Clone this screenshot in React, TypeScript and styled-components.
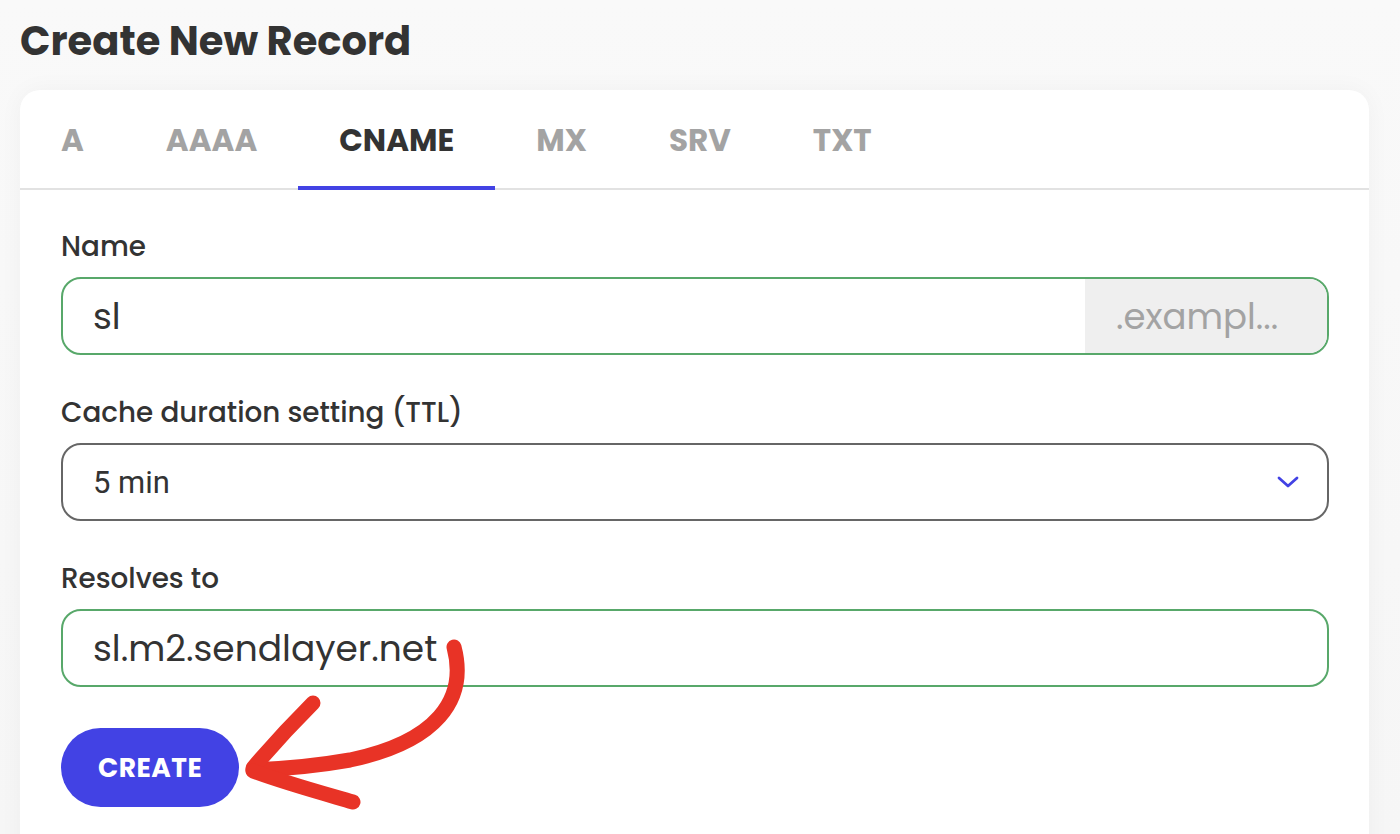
import React from "react";
import styled, { createGlobalStyle } from "styled-components";

const Global = createGlobalStyle`
  * { box-sizing: border-box; }
  html, body { margin: 0; padding: 0; }
  body {
    background: #f7f7f7;
    font-family: "Poppins", "Inter", "Noto Sans", sans-serif;
    color: #333333;
    overflow: hidden;
  }
`;

const Page = styled.div`
  position: relative;
  width: 1400px;
  height: 834px;
  padding: 17px 31px 0 20px;
  background: linear-gradient(180deg, #f9f9f9 0%, #f6f6f6 100%);
`;

const Title = styled.h1`
  margin: 0 0 25px 0;
  font-size: 40px;
  line-height: 48px;
  font-weight: 700;
  color: #333333;
`;

const Card = styled.section`
  background: #ffffff;
  border-radius: 20px;
  box-shadow: 0 0 24px rgba(0, 0, 0, 0.04);
  padding-bottom: 60px;
`;

const TabBar = styled.nav`
  display: flex;
  border-bottom: 2px solid #e2e2e2;
  height: 100px;
`;

const Tab = styled.button<{ $active?: boolean }>`
  appearance: none;
  border: none;
  background: none;
  padding: 4px 41px 0;
  margin: 0 0 -2px 0;
  height: 100px;
  font-family: inherit;
  font-size: 31px;
  font-weight: 700;
  color: ${(p) => (p.$active ? "#333333" : "#a3a3a3")};
  border-bottom: 4px solid ${(p) => (p.$active ? "#4242e4" : "transparent")};
  cursor: pointer;
`;

const Form = styled.div`
  display: flex;
  flex-direction: column;
  padding: 42px 40px 0 41px;
`;

const Field = styled.div`
  display: flex;
  flex-direction: column;
  gap: 15px;
  margin-bottom: 43px;
`;

const Label = styled.label`
  font-size: 27.8px;
  line-height: 30px;
  font-weight: 500;
  color: #333333;
`;

const InputBox = styled.div<{ $tone: "ok" | "plain" }>`
  display: flex;
  align-items: stretch;
  height: 78px;
  border: 2px solid ${(p) => (p.$tone === "ok" ? "#58a86a" : "#666666")};
  border-radius: 20px;
  overflow: hidden;
  background: #ffffff;
`;

const Value = styled.div`
  flex: 1;
  display: flex;
  align-items: center;
  padding-left: 30px;
  font-size: 36px;
  color: #333333;
`;

const SelectValue = styled(Value)`
  font-family: "Roboto", "Liberation Sans", sans-serif;
  font-size: 31px;
  justify-content: space-between;
  padding-right: 28px;
`;

const Suffix = styled.div`
  width: 242px;
  display: flex;
  align-items: center;
  padding-left: 31px;
  background: #efefef;
  color: #a3a3a3;
  font-size: 35.5px;
  white-space: nowrap;
`;

const CreateButton = styled.button`
  align-self: flex-start;
  margin-top: -2px;
  height: 79px;
  padding: 0 37px;
  border: none;
  border-radius: 40px;
  background: #4242e4;
  color: #ffffff;
  font-family: inherit;
  font-size: 26.5px;
  font-weight: 700;
  letter-spacing: 0.5px;
  cursor: pointer;
`;

const Overlay = styled.svg`
  position: absolute;
  left: 0;
  top: 0;
  pointer-events: none;
`;

const Chevron = () => (
  <svg width="22" height="14" viewBox="0 0 22 14" fill="none">
    <path d="M2 3 L11 11 L20 3" stroke="#4242e4" strokeWidth="2.8" strokeLinecap="round" strokeLinejoin="round" />
  </svg>
);

const tabs = ["A", "AAAA", "CNAME", "MX", "SRV", "TXT"];

export default function App() {
  return (
    <Page>
      <Global />
      <Title>Create New Record</Title>
      <Card>
        <TabBar>
          {tabs.map((t) => (
            <Tab key={t} $active={t === "CNAME"}>
              {t}
            </Tab>
          ))}
        </TabBar>
        <Form>
          <Field>
            <Label>Name</Label>
            <InputBox $tone="ok">
              <Value>sl</Value>
              <Suffix>.exampl...</Suffix>
            </InputBox>
          </Field>
          <Field>
            <Label>Cache duration setting (TTL)</Label>
            <InputBox $tone="plain">
              <SelectValue>
                5 min
                <Chevron />
              </SelectValue>
            </InputBox>
          </Field>
          <Field>
            <Label>Resolves to</Label>
            <InputBox $tone="ok">
              <Value>sl.m2.sendlayer.net</Value>
            </InputBox>
          </Field>
          <CreateButton>CREATE</CreateButton>
        </Form>
      </Card>
      <Overlay width="1400" height="834" viewBox="0 0 1400 834">
        <g stroke="#e83326" strokeWidth="15" strokeLinecap="round" strokeLinejoin="round" fill="none">
          <path d="M454 647 C468 700 436 742 350 760 C305 768 275 769 253 770" />
          <path d="M313 703 C294 722 270 748 253 768" />
          <path d="M253 771 C285 783 322 793 353 802" />
        </g>
      </Overlay>
    </Page>
  );
}
